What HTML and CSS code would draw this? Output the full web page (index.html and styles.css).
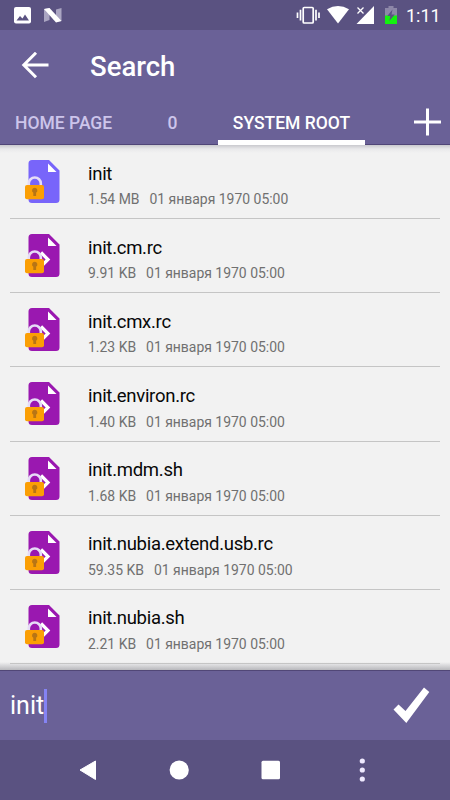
FILE: index.html
```
<!DOCTYPE html>
<html lang="en">
<head>
<meta charset="utf-8">
<title>Search</title>
<link rel="stylesheet" href="styles.css">
</head>
<body>
<svg width="0" height="0" class="defs">
  <defs>
    <g id="page">
      <path d="M6.500 0H24L34.500 10.500V39.500Q34.500 43 31 43H7Q3.500 43 3.500 39.500V3.500Q3.500 0 7 0Z"/>
      <path fill="#fff" d="M23 3.500V12H31.500Z"/>
    </g>
    <g id="lock">
      <path d="M3.800 26V23.500a6 6 0 0 1 12 0V26" fill="none" stroke="#e6dcf6" stroke-width="2.600"/>
      <rect x="0" y="25" width="19" height="14.300" rx="2" fill="#fb9f05"/>
      <path fill="#b87515" d="M9.700 27.800a2.700 2.700 0 0 1 1.400 5V36H8.300V32.800a2.700 2.700 0 0 1 1.400-5Z"/>
    </g>
    <symbol id="file" viewBox="0 0 36 43"><use href="#page" fill="#7865fa"/><use href="#lock"/></symbol>
    <symbol id="script" viewBox="0 0 36 43"><use href="#page" fill="#9a18b0"/><path d="M16 18.500L23 25.500L16 32.500" fill="none" stroke="#fff" stroke-width="3.200"/><use href="#lock"/></symbol>
  </defs>
</svg>
<div class="screen">
  <div class="status">
    <svg width="70" height="30" viewBox="0 0 70 30">
      <rect x="14" y="7" width="17" height="16.500" rx="2" fill="#fff"/>
      <path d="M16.500 20.500L20 16L22.500 18.500L25 14.500L29 20.500Z" fill="#5a5281"/>
      <path d="M44 9L49.500 8V20L44 22ZM56 9.500L61.500 8V21L56 22Z" fill="#aaa5c2"/>
      <path d="M44 9L49.500 8L61.500 21L56 22.500Z" fill="#fff"/>
    </svg>
    <div class="status-right">
      <svg width="110" height="30" viewBox="296 0 110 30">
        <g fill="none" stroke="#fff" stroke-width="1.700"><rect x="303.200" y="7.500" width="10" height="15.500" rx="1"/><path d="M300.500 9.800V20.500M297.500 12.500V18M316 9.800V20.500M319 12.500V18"/></g>
        <path d="M327 9.300Q338 2.500 349 9.300L338 23.500Z" fill="#fff"/>
        <path d="M374 6V24H356.500Z" fill="#fff"/><path d="M357.500 7.500L363.500 13.500M363.500 7.500L357.500 13.500" stroke="#fff" stroke-width="1.300"/>
        <path d="M388.500 6h5v2h3.500v8h-12V8h3.500Z" fill="#8d87a8"/><path d="M385 15.500h12V24h-12Z" fill="#13f20f"/><path d="M392.500 9.500L387.300 16H390.300L389.300 21L394.700 14.500H391.500Z" fill="#5a5281"/>
      </svg>
      <span class="clock">1:11</span>
    </div>
  </div>
  <header class="header">
    <div class="bar">
      <svg width="28" height="28" viewBox="0 0 28 28" fill="none" stroke="#fff" stroke-width="3"><path d="M27.500 13H3M15 .8L2.800 13L15 25.200"/></svg>
      <h1>Search</h1>
    </div>
    <nav class="tabs">
      <span class="tab home">HOME PAGE</span>
      <span class="tab zero">0</span>
      <span class="tab active">SYSTEM ROOT</span>
      <svg class="plus" width="28" height="28" viewBox="0 0 28 28" stroke="#fff" stroke-width="3"><path d="M13.500 .5V27.500M0 14H27"/></svg>
    </nav>
  </header>
  <main class="list">
    <div class="row"><svg class="icon"><use href="#file"/></svg><div><div class="name">init</div><div class="meta"><span>1.54 MB</span><span>01 января 1970 05:00</span></div></div></div>
    <div class="row"><svg class="icon"><use href="#script"/></svg><div><div class="name">init.cm.rc</div><div class="meta"><span>9.91 KB</span><span>01 января 1970 05:00</span></div></div></div>
    <div class="row"><svg class="icon"><use href="#script"/></svg><div><div class="name">init.cmx.rc</div><div class="meta"><span>1.23 KB</span><span>01 января 1970 05:00</span></div></div></div>
    <div class="row"><svg class="icon"><use href="#script"/></svg><div><div class="name">init.environ.rc</div><div class="meta"><span>1.40 KB</span><span>01 января 1970 05:00</span></div></div></div>
    <div class="row"><svg class="icon"><use href="#script"/></svg><div><div class="name">init.mdm.sh</div><div class="meta"><span>1.68 KB</span><span>01 января 1970 05:00</span></div></div></div>
    <div class="row"><svg class="icon"><use href="#script"/></svg><div><div class="name">init.nubia.extend.usb.rc</div><div class="meta"><span>59.35 KB</span><span>01 января 1970 05:00</span></div></div></div>
    <div class="row"><svg class="icon"><use href="#script"/></svg><div><div class="name">init.nubia.sh</div><div class="meta"><span>2.21 KB</span><span>01 января 1970 05:00</span></div></div></div>
  </main>
  <div class="query">
    <div class="field">init<span class="caret"></span></div>
    <svg width="38" height="38" viewBox="0 0 38 38"><path d="M.5 22.500L5.500 17.500L12.500 24L31 .5L36.300 5L13.300 36Z" fill="#fff"/></svg>
  </div>
  <div class="navbar">
    <svg width="450" height="60" viewBox="0 0 450 60" fill="#fff">
      <path d="M80 30L95.500 21V39.500Z" stroke="#fff" stroke-linejoin="round"/>
      <circle cx="179.200" cy="30" r="9.600"/>
      <rect x="261.500" y="20.800" width="18.500" height="18.500" rx="1.500"/>
      <g fill="#efeaff"><circle cx="362.300" cy="21" r="2.600"/><circle cx="362.300" cy="30" r="2.600"/><circle cx="362.300" cy="39" r="2.600"/></g>
    </svg>
  </div>
</div>
</body>
</html>
```
FILE: styles.css
```
* { box-sizing: border-box; }
body { margin: 0; font-family: Roboto, "Liberation Sans", sans-serif; }
.defs { position: absolute; }
svg { display: block; flex: none; }
.screen { width: 450px; height: 800px; display: flex; flex-direction: column; overflow: hidden; background: #f2f2f2; }
.status { height: 30px; flex: none; display: flex; justify-content: space-between; background: #5a5281; }
.status-right { display: flex; padding-right: 10px; }
.clock { width: 34px; color: #fff; font-size: 18px; line-height: 31px; white-space: nowrap; }
.header { height: 115px; flex: none; background: #6a6197; border-bottom: 1px solid #504678; }
.bar { height: 71px; display: flex; align-items: center; padding-left: 21px; gap: 41px; }
h1 { margin: 0; color: #fff; font-size: 27.500px; font-weight: 500; line-height: 36px; padding-top: 2px; }
.tabs { height: 44px; display: flex; align-items: stretch; padding-right: 8px; }
.tab { font-size: 17.500px; font-weight: 500; line-height: 45px; color: #cdc5eb; white-space: nowrap; }
.home { width: 127px; padding-left: 15px; }
.zero { width: 91px; text-align: center; }
.active { width: 147px; text-align: center; color: #fff; border-bottom: 5px solid #fff; }
.plus { margin: 7px 0 0 auto; }
.list { height: 525px; flex: none; overflow: hidden; background: linear-gradient(#c9c9ce 0, #e9e9eb 4px, #f2f2f2 8px, #f2f2f2 517px, #dcdcde 520px, #b8b8bc 525px); }
.row { height: 74.200px; margin: 0 10px; padding-left: 15px; display: flex; border-bottom: 1px solid #c5c5c5; }
.row:first-child { height: 74px; }
.icon { width: 36px; height: 43px; margin: 15px 27px 0 0; }
.name { margin-top: 17.500px; color: #080808; font-size: 18.500px; letter-spacing: -0.280px; line-height: 23px; }
.meta { display: flex; gap: 10px; margin-top: 5.700px; color: #707070; font-size: 13.950px; line-height: 17px; white-space: nowrap; }
.query { height: 70px; flex: none; display: flex; justify-content: space-between; align-items: center; padding: 0 19px 0 10px; background: #6a6197; border-top: 1px solid #514777; }
.field { display: flex; align-items: center; padding-top: 1px; color: #fff; font-size: 25px; line-height: 36px; }
.caret { width: 3px; height: 34px; background: #8583f4; }
.navbar { height: 60px; flex: none; background: #5a5281; }
```
